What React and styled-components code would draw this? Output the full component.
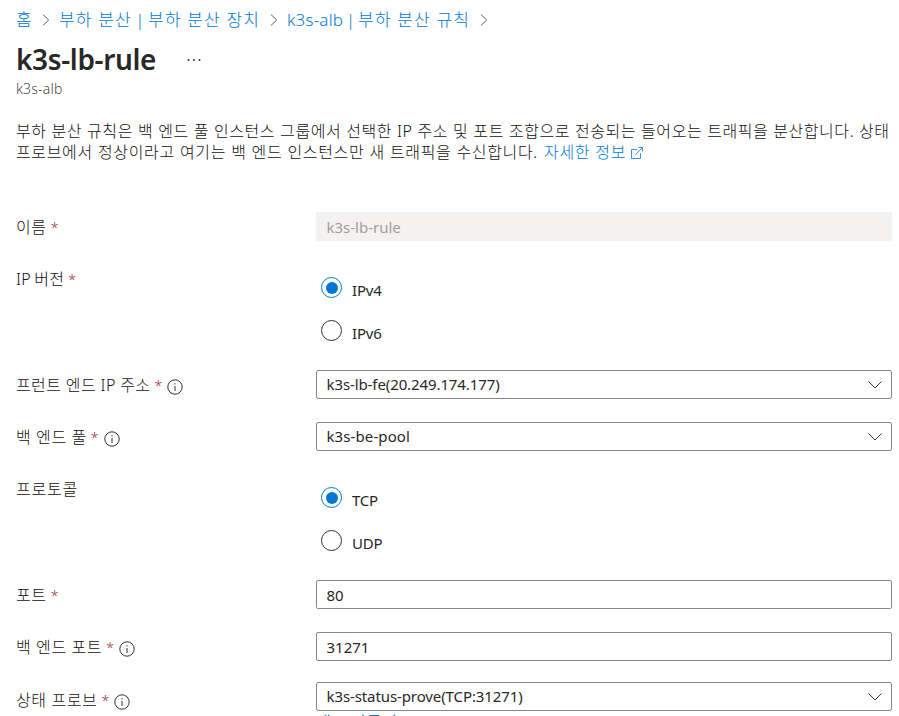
import React from "react";
import styled, { createGlobalStyle } from "styled-components";

const Global = createGlobalStyle`
  * { box-sizing: border-box; }
  html, body { margin: 0; background: #fff; }
  body {
    height: 716px;
    overflow: hidden;
    color: #11100f;
    font: 300 16px/21px "Noto Sans", "Noto Sans CJK KR", sans-serif;
  }
`;

const Page = styled.main`
  height: 716px;
  overflow: hidden;
  padding: 9px 7px 0 16px;
`;

const Korean = styled.span`
  letter-spacing: ${(p) => p.$ls ?? 0.6}px;
  word-spacing: ${(p) => p.$ws ?? 0}px;
  white-space: nowrap;
`;

const Latin = styled.span`
  font-size: 15px;
  font-weight: 400;
  letter-spacing: ${(p) => p.$ls || 0}px;
  white-space: nowrap;
`;

const Breadcrumb = styled.nav`
  display: flex;
  align-items: center;
  height: 22px;
  font-size: 17px;
  line-height: 20px;
  color: #0078d4;
`;

const Crumb = styled.a`
  display: flex;
  width: ${(p) => p.$w}px;
  letter-spacing: 1.15px;
  white-space: nowrap;
  color: inherit;
`;

const CrumbLatin = styled.span`
  letter-spacing: 0.2px;
`;

const Bar = styled.span`
  width: 17px;
  text-align: center;
  letter-spacing: 0;
`;

const CrumbArrow = styled.svg`
  width: 27px;
  height: 14px;
  padding: 0 9px 0 10px;
  fill: none;
  stroke: #605e5c;
`;

const TitleRow = styled.header`
  display: flex;
  align-items: center;
  height: 46px;
  margin-top: 5px;
`;

const Title = styled.h1`
  width: 171px;
  margin: 0;
  font-size: 28px;
  line-height: 38px;
  font-weight: 600;
  letter-spacing: -0.35px;
  white-space: nowrap;
  color: #292827;
`;

const More = styled.svg`
  width: 14px;
  height: 4px;
  margin-top: 2px;
  fill: #323130;
`;

const Subtitle = styled.div`
  height: 18px;
  margin-top: -2px;
  font-size: 14px;
  line-height: 18px;
  letter-spacing: 0.2px;
  color: #484644;
`;

const Description = styled.p`
  margin: 23px 0 0;
  height: 91px;
  line-height: 21px;
`;

const Line = styled.span`
  display: flex;
  align-items: center;
  height: 21px;
`;

const Link = styled.a`
  display: inline-flex;
  align-items: center;
  gap: 4px;
  margin-left: 6px;
  color: #0078d4;
`;

const Form = styled.form`
  display: flex;
  flex-direction: column;
`;

const Row = styled.div`
  display: grid;
  grid-template-columns: 300px 576px;
  height: ${(p) => p.$h || 52}px;
`;

const Label = styled.label`
  display: flex;
  align-items: center;
  height: ${(p) => (p.$drop ? 35 : 31)}px;
  padding-top: ${(p) => p.$drop || 0}px;
`;

const Star = styled.span`
  margin-left: 4px;
  font-size: 14px;
  color: #a4262c;
`;

const InfoSvg = styled.svg`
  width: 16px;
  height: 16px;
  margin: 2px 0 0 5px;
  fill: none;
  stroke: #323130;
`;

const Field = styled.div`
  display: flex;
  align-items: center;
  justify-content: space-between;
  height: 29px;
  padding: ${(p) => (p.$input ? 2 : 0)}px 8px 0 9.5px;
  border: 1px solid ${(p) => (p.$disabled ? "#f3f2f1" : "#8a8886")};
  border-radius: 2px;
  background: ${(p) => (p.$disabled ? "#f3f2f1" : "#fff")};
  color: ${(p) => (p.$disabled ? "#a19f9d" : "#292827")};
`;

const Chevron = styled.svg`
  width: 16px;
  height: 10px;
  fill: none;
  stroke: #3b3a39;
`;

const Radios = styled.div`
  display: flex;
  flex-direction: column;
  padding: 13px 0 0 5px;
  color: #292827;
`;

const Option = styled.label`
  display: flex;
  gap: 10px;
  height: 43px;
  line-height: 26px;
`;

const Circle = styled.span`
  width: 21px;
  height: 21px;
  border: 1px solid ${(p) => (p.$on ? "#0078d4" : "#323130")};
  border-radius: 50%;
  padding: 3.5px;
`;

const Dot = styled.span`
  display: block;
  width: 12px;
  height: 12px;
  border-radius: 50%;
  background: #0078d4;
`;

const CreateLink = styled.a`
  display: block;
  margin-top: 1px;
  font-weight: 400;
  letter-spacing: 0.6px;
  color: #0078d4;
`;

const Arrow = () => (
  <CrumbArrow viewBox="0 0 8 14"><path d="M1 1.5 6.7 7 1 12.5" /></CrumbArrow>
);

const Info = () => (
  <InfoSvg viewBox="0 0 16 16">
    <circle cx="8" cy="8" r="7.2" />
    <path d="M8 7v5M8 4.2v1.3" />
  </InfoSvg>
);

const External = () => (
  <svg width="14" height="14" viewBox="0 0 14 14" fill="none" stroke="#0078d4">
    <path d="M7 3.5H1.5v9h9V7M8.5 1.5h4v4M12.5 1.5l-7 7" strokeWidth="0.8" />
  </svg>
);

function FormRow({ label, ls, ws, required, info, h, drop, children }) {
  return (
    <Row $h={h}>
      <Label $drop={drop}>
        <Korean $ls={ls} $ws={ws}>{label}</Korean>
        {required && <Star>*</Star>}
        {info && <Info />}
      </Label>
      <div>{children}</div>
    </Row>
  );
}

const Select = ({ value, ls }) => (
  <Field>
    <Latin $ls={ls}>{value}</Latin>
    <Chevron viewBox="0 0 16 10"><path d="M1.5 1.5 8 8l6.5-6.5" /></Chevron>
  </Field>
);

const RadioGroup = ({ options }) => (
  <Radios>
    {options.map((name, i) => (
      <Option key={name}>
        <Circle $on={i === 0}>{i === 0 && <Dot />}</Circle>
        <Latin $ls={-0.2}>{name}</Latin>
      </Option>
    ))}
  </Radios>
);

export default function App() {
  return (
    <Page>
      <Global />
      <Breadcrumb>
        <Crumb $w={16}>홈</Crumb>
        <Arrow />
        <Crumb $w={201}>부하 분산<Bar>|</Bar>부하 분산 장치</Crumb>
        <Arrow />
        <Crumb $w={183}><CrumbLatin>k3s-alb</CrumbLatin><Bar>|</Bar>부하 분산 규칙</Crumb>
        <Arrow />
      </Breadcrumb>
      <TitleRow>
        <Title>k3s-lb-rule</Title>
        <More viewBox="0 0 14 4">
          <circle cx="1.5" cy="2" r="1" /><circle cx="7" cy="2" r="1" /><circle cx="12.5" cy="2" r="1" />
        </More>
      </TitleRow>
      <Subtitle>k3s-alb</Subtitle>
      <Description>
        <Line><Korean $ls={0.55} $ws={0.3}>부하 분산 규칙은 백 엔드 풀 인스턴스 그룹에서 선택한 IP 주소 및 포트 조합으로 전송되는 들어오는 트래픽을 분산합니다. 상태</Korean></Line>
        <Line>
          <Korean $ls={0.65} $ws={0.3}>프로브에서 정상이라고 여기는 백 엔드 인스턴스만 새 트래픽을 수신합니다.</Korean>
          <Link><Korean $ls={0.75}>자세한 정보</Korean><External /></Link>
        </Line>
      </Description>
      <Form>
        <FormRow label="이름" required><Field $disabled $input><Latin>k3s-lb-rule</Latin></Field></FormRow>
        <FormRow label="IP 버전" ls={0.2} ws={-0.8} required h={106}><RadioGroup options={["IPv4", "IPv6"]} /></FormRow>
        <FormRow label="프런트 엔드 IP 주소" ls={0.4} ws={-0.1} required info><Select value="k3s-lb-fe(20.249.174.177)" ls={-0.1} /></FormRow>
        <FormRow label="백 엔드 풀" required info><Select value="k3s-be-pool" ls={0.1} /></FormRow>
        <FormRow label="프로토콜" ls={0.8} h={106}><RadioGroup options={["TCP", "UDP"]} /></FormRow>
        <FormRow label="포트" required><Field $input><Latin>80</Latin></Field></FormRow>
        <FormRow label="백 엔드 포트" required info h={50}><Field $input><Latin>31271</Latin></Field></FormRow>
        <FormRow label="상태 프로브" required info drop={2}>
          <Select value="k3s-status-prove(TCP:31271)" ls={-0.1} />
          <CreateLink>새로 만들기</CreateLink>
        </FormRow>
      </Form>
    </Page>
  );
}
